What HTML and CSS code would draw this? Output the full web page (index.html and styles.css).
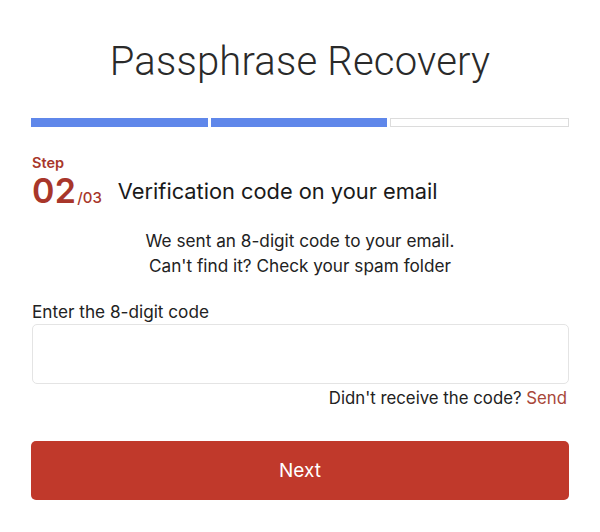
FILE: index.html
```html
<!DOCTYPE html>
<html lang="en">
<head>
<meta charset="utf-8">
<title>Passphrase Recovery</title>
<link rel="stylesheet" href="styles.css">
</head>
<body>
<main class="page">
  <h1 class="title">Passphrase Recovery</h1>
  <div class="progress">
    <span class="seg done"></span>
    <span class="seg done"></span>
    <span class="seg"></span>
  </div>
  <div class="step">
    <div class="step-num">
      <span class="step-label">Step</span>
      <span class="step-count"><span class="big">02</span><span class="small">/03</span></span>
    </div>
    <h2 class="step-title">Verification code on your email</h2>
  </div>
  <p class="info">We sent an 8-digit code to your email.<br>Can't find it? Check your spam folder</p>
  <label class="label" for="code">Enter the 8-digit code</label>
  <input class="input" id="code" type="text">
  <p class="resend">Didn't receive the code? <a class="send" href="#">Send</a></p>
  <button class="next" type="button">Next</button>
</main>
</body>
</html>
```
FILE: styles.css
```css
* { box-sizing: border-box; }
body {
  margin: 0;
  background: #fff;
  font-family: "Inter", "Noto Sans", sans-serif;
  color: #1e1e1e;
}
.page {
  width: 538px;
  margin: 0 0 0 31px;
  display: flex;
  flex-direction: column;
}
.title {
  margin: 34px 0 0;
  height: 56px;
  font-family: "Roboto", sans-serif;
  font-weight: 300;
  font-size: 40px;
  line-height: 56px;
  text-align: center;
  color: #2a2a2a;
  letter-spacing: 0.2px;
}
.progress {
  margin-top: 28px;
  display: flex;
  gap: 3px;
  height: 9px;
}
.seg {
  flex: 1;
  background: #fff;
  border: 1.5px solid #dcdcdc;
}
.seg.done {
  background: #5f87ea;
  border: none;
}
.step {
  margin-top: 28px;
  display: flex;
  align-items: flex-end;
  gap: 16px;
}
.step-num {
  display: flex;
  flex-direction: column;
  color: #a8362a;
  padding-left: 1px;
}
.step-label {
  font-weight: 600;
  font-size: 14.5px;
  line-height: 16px;
  margin-bottom: 6px;
}
.step-count {
  line-height: 28px;
  height: 28px;
  display: flex;
  align-items: baseline;
}
.big {
  font-size: 34px;
  font-weight: 600;
  letter-spacing: 0.3px;
}
.small {
  font-size: 15px;
  font-weight: 500;
  margin-left: 1px;
}
.step-title {
  margin: 0;
  font-size: 21.8px;
  font-weight: 400;
  line-height: 28px;
  color: #1a1a1a;
}
.info {
  margin: 23px 0 0;
  text-align: center;
  font-size: 17.2px;
  line-height: 25px;
  color: #222;
}
.label {
  margin-top: 23px;
  margin-left: 1px;
  font-size: 17.2px;
  line-height: 22px;
  color: #222;
}
.input {
  margin-top: 1px;
  margin-left: 1px;
  width: 537px;
  height: 60px;
  border: 1px solid #e4e4e4;
  border-radius: 5px;
  background: #fff;
}
.resend {
  margin: 3px 2px 0 0;
  text-align: right;
  font-size: 16.8px;
  line-height: 22px;
  color: #222;
}
.send { color: #a8473a; text-decoration: none; }
.next {
  margin-top: 32px;
  height: 59px;
  border: none;
  border-radius: 5px;
  background: #c0392b;
  color: #fff;
  font-family: "Inter", "Noto Sans", sans-serif;
  font-size: 19px;
}
```
